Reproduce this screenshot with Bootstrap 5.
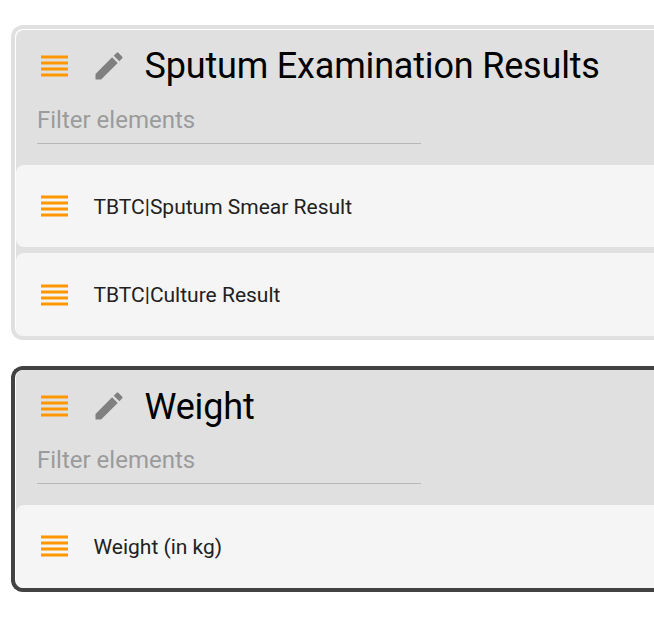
<!DOCTYPE html>
<html lang="en">
<head>
<meta charset="utf-8">
<meta name="viewport" content="width=device-width, initial-scale=1">
<title>Sections</title>
<link href="https://cdn.jsdelivr.net/npm/bootstrap@5.3.0/dist/css/bootstrap.min.css" rel="stylesheet">
<style>
body{font-family:Roboto,"Liberation Sans",sans-serif;background:#fff;color:#212121;overflow:hidden}
.board{padding:25px 0 0 11px;gap:26px}
.section{border:4px solid #e0e0e0;border-right:0;border-radius:12px 0 0 12px;padding-left:1px;background:#fff;overflow:hidden}
.section-light{padding-top:1px}
.section-dark{border-color:#424242}
.section-inner{background:#e0e0e0;border-radius:8px 0 0 8px}
.section-head{height:135px;padding:0 0 0 21px}
.title-row{height:72px}
.section-title{font-size:36px;line-height:72px;color:#000;font-weight:400;margin-left:18px;letter-spacing:-.18px;white-space:nowrap}
.section-dark .section-title{padding-top:1px}
.handle{width:28px;height:22px;margin-left:3px;fill:#ff9800;flex:none}
.pencil{width:36px;height:36px;margin-left:22.5px;fill:#808080;flex:none}
.filter{width:384px;height:42px;padding:0 0 5px;border:0;border-bottom:1px solid #b8b8b8;border-radius:0;background:transparent;font-size:24px;line-height:36px;color:#9b9b9b}
.filter::placeholder{color:#9b9b9b;opacity:1}
.filter:focus{background:transparent;box-shadow:none}
.items{gap:6px}
.item{height:83px;padding-left:21px;background:#f5f5f5;border-radius:8px 0 0 8px;font-size:21px}
.item-short{height:82px}
.section-dark .item .handle{margin-bottom:2px}
.item-label{margin-left:25.5px;padding-top:2px;white-space:nowrap}
.item-short .item-label{padding-top:3px}
</style>
<script src="https://cdn.jsdelivr.net/npm/bootstrap@5.3.0/dist/js/bootstrap.bundle.min.js"></script>
</head>
<body>
<svg class="d-none" xmlns="http://www.w3.org/2000/svg">
<symbol id="bars" viewBox="0 0 28 22"><path d="M1 .6h27v2.8H1zM1 6.6h27v2.8H1zM1 12.6h27v2.8H1zM1 18.6h27v2.8H1z"/></symbol>
<symbol id="edit" viewBox="0 0 24 24"><path d="M3 17.25V21h3.75L17.81 9.94l-3.75-3.75L3 17.25zM20.71 7.04c.39-.39.39-1.02 0-1.41l-2.34-2.34c-.39-.39-1.02-.39-1.41 0l-1.83 1.83 3.75 3.75 1.83-1.83z"/></symbol>
</svg>
<main class="board d-flex flex-column">
<section class="section section-light">
<div class="section-inner">
<header class="section-head">
<div class="title-row d-flex align-items-center">
<svg class="handle"><use href="#bars"/></svg>
<svg class="pencil"><use href="#edit"/></svg>
<h1 class="section-title mb-0">Sputum Examination Results</h1>
</div>
<input class="filter form-control" type="text" placeholder="Filter elements" aria-label="Filter elements">
</header>
<div class="items d-flex flex-column">
<div class="item item-short d-flex align-items-center"><svg class="handle"><use href="#bars"/></svg><span class="item-label">TBTC|Sputum Smear Result</span></div>
<div class="item d-flex align-items-center"><svg class="handle"><use href="#bars"/></svg><span class="item-label">TBTC|Culture Result</span></div>
</div>
</div>
</section>
<section class="section section-dark">
<div class="section-inner">
<header class="section-head">
<div class="title-row d-flex align-items-center">
<svg class="handle"><use href="#bars"/></svg>
<svg class="pencil"><use href="#edit"/></svg>
<h1 class="section-title mb-0">Weight</h1>
</div>
<input class="filter form-control" type="text" placeholder="Filter elements" aria-label="Filter elements">
</header>
<div class="items d-flex flex-column">
<div class="item d-flex align-items-center"><svg class="handle"><use href="#bars"/></svg><span class="item-label">Weight (in kg)</span></div>
</div>
</div>
</section>
</main>
</body>
</html>
